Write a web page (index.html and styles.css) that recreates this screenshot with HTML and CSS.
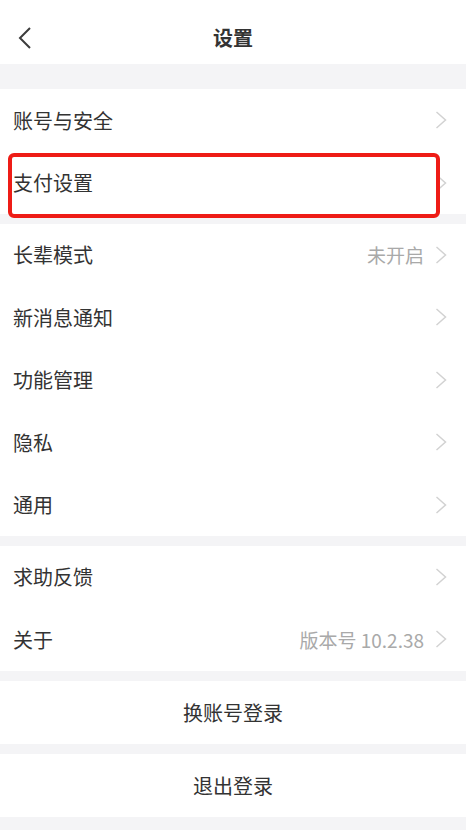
FILE: index.html
```html
<!DOCTYPE html>
<html lang="zh-CN">
<head>
<meta charset="utf-8">
<title>设置</title>
<link rel="stylesheet" href="styles.css">
</head>
<body>
<div class="page">
  <header class="topbar">
    <span class="back">
      <svg width="16" height="24" viewBox="0 0 16 24"><polyline points="13,2 3,12 13,22" fill="none" stroke="#3c3c3c" stroke-width="2"/></svg>
    </span>
    <h1 class="title">设置</h1>
  </header>

  <section class="group group-first">
    <div class="row"><span class="label">账号与安全</span><span class="right"><svg class="chev" viewBox="0 0 12 18"><polyline points="1.5,1 10.5,9 1.5,17"/></svg></span></div>
    <div class="row"><span class="label">支付设置</span><span class="right"><svg class="chev" viewBox="0 0 12 18"><polyline points="1.5,1 10.5,9 1.5,17"/></svg></span><span class="mark"></span></div>
  </section>

  <section class="group">
    <div class="row"><span class="label">长辈模式</span><span class="right"><span class="value">未开启</span><svg class="chev" viewBox="0 0 12 18"><polyline points="1.5,1 10.5,9 1.5,17"/></svg></span></div>
    <div class="row"><span class="label">新消息通知</span><span class="right"><svg class="chev" viewBox="0 0 12 18"><polyline points="1.5,1 10.5,9 1.5,17"/></svg></span></div>
    <div class="row"><span class="label">功能管理</span><span class="right"><svg class="chev" viewBox="0 0 12 18"><polyline points="1.5,1 10.5,9 1.5,17"/></svg></span></div>
    <div class="row"><span class="label">隐私</span><span class="right"><svg class="chev" viewBox="0 0 12 18"><polyline points="1.5,1 10.5,9 1.5,17"/></svg></span></div>
    <div class="row"><span class="label">通用</span><span class="right"><svg class="chev" viewBox="0 0 12 18"><polyline points="1.5,1 10.5,9 1.5,17"/></svg></span></div>
  </section>

  <section class="group">
    <div class="row"><span class="label">求助反馈</span><span class="right"><svg class="chev" viewBox="0 0 12 18"><polyline points="1.5,1 10.5,9 1.5,17"/></svg></span></div>
    <div class="row"><span class="label">关于</span><span class="right"><span class="value">版本号 10.2.38</span><svg class="chev" viewBox="0 0 12 18"><polyline points="1.5,1 10.5,9 1.5,17"/></svg></span></div>
  </section>

  <section class="group">
    <div class="btn">换账号登录</div>
  </section>
  <section class="group">
    <div class="btn">退出登录</div>
  </section>
</div>
</body>
</html>
```

FILE: styles.css
```css
html, body {
  margin: 0;
  padding: 0;
  background: #f4f4f6;
}
body {
  font-family: "Noto Sans CJK SC", "Noto Sans", sans-serif;
  color: #333;
}
.page {
  width: 466px;
  min-height: 830px;
  display: flex;
  flex-direction: column;
}
.topbar {
  height: 64px;
  box-sizing: border-box;
  padding-top: 12px;
  background: #fff;
  display: flex;
  align-items: center;
  justify-content: center;
  position: relative;
}
.back {
  position: absolute;
  left: 17px;
  top: 26px;
  width: 16px;
  height: 24px;
  display: flex;
}
.title {
  margin: 0;
  font-size: 20px;
  font-weight: 700;
  color: #333;
  line-height: 1;
}
.group {
  background: #fff;
  margin-top: 10px;
  display: flex;
  flex-direction: column;
}
.group-first {
  margin-top: 25px;
}
.row {
  height: 62.4px;
  display: flex;
  align-items: center;
  justify-content: space-between;
  padding: 0 19px 0 13px;
  position: relative;
}
.label {
  font-size: 20px;
  color: #333;
}
.right {
  display: flex;
  align-items: center;
  gap: 11px;
}
.value {
  font-size: 19px;
  color: #a9a9a9;
}
.chev {
  display: block;
  width: 12px;
  height: 18px;
  fill: none;
  stroke: #d2d2d2;
  stroke-width: 1.5;
}
.mark {
  position: absolute;
  left: 8px;
  top: 2px;
  width: 432px;
  height: 65px;
  box-sizing: border-box;
  border: 4px solid #ee1c16;
  border-radius: 6px;
}
.btn {
  height: 63px;
  display: flex;
  align-items: center;
  justify-content: center;
  font-size: 20px;
  color: #333;
}
```
